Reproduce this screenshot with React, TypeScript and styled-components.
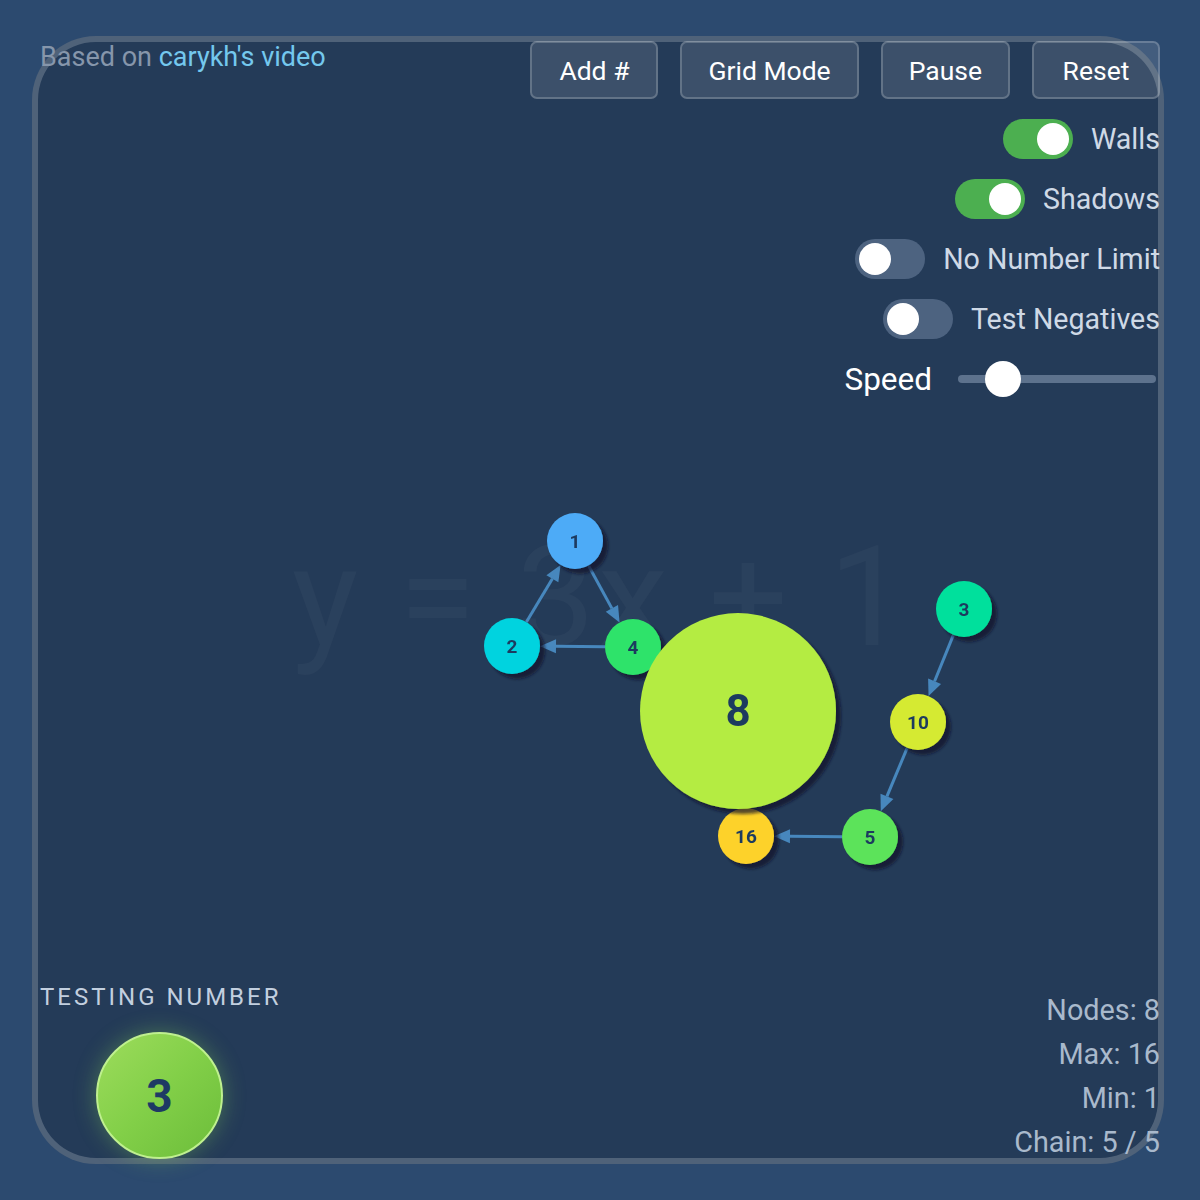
import React from "react";
import styled, { createGlobalStyle } from "styled-components";

const GlobalStyle = createGlobalStyle`
  html, body {
    margin: 0;
    padding: 0;
    background: #2c4a6f;
  }
  * {
    box-sizing: border-box;
  }
`;

type GraphNode = { id: number; x: number; y: number; r: number; color: string };

// drawing order matters: 8 sits on top of 16
const nodes: GraphNode[] = [
  { id: 1, x: 575, y: 541, r: 28, color: "#4dabf7" },
  { id: 2, x: 512, y: 646, r: 28, color: "#00d3df" },
  { id: 4, x: 633, y: 647, r: 28, color: "#2fe36b" },
  { id: 3, x: 964, y: 609, r: 28, color: "#00e09c" },
  { id: 10, x: 918, y: 722, r: 28, color: "#d5ea31" },
  { id: 5, x: 870, y: 837, r: 28, color: "#5be35a" },
  { id: 16, x: 746, y: 836, r: 28, color: "#fdd22a" },
  { id: 8, x: 738, y: 711, r: 98, color: "#b4ec43" },
];

const edges: [number, number][] = [
  [2, 1],
  [1, 4],
  [4, 2],
  [3, 10],
  [10, 5],
  [5, 16],
];

const buttons = ["Add #", "Grid Mode", "Pause", "Reset"];

const toggles = [
  { label: "Walls", on: true },
  { label: "Shadows", on: true },
  { label: "No Number Limit", on: false },
  { label: "Test Negatives", on: false },
];

const stats = ["Nodes: 8", "Max: 16", "Min: 1", "Chain: 5 / 5"];

const speed = 1 / 6;

const Page = styled.div`
  position: relative;
  width: 1200px;
  height: 1200px;
  padding: 36px 36px 36px 32px;
  font-family: Roboto, "Liberation Sans", sans-serif;
  overflow: hidden;
`;

const Panel = styled.div`
  width: 100%;
  height: 100%;
  background: #243b58;
  border: 6px solid rgba(255, 255, 255, 0.2);
  border-radius: 64px;
`;

const Graph = styled.svg`
  position: absolute;
  inset: 0;
  width: 1200px;
  height: 1200px;
`;

const Hud = styled.div`
  position: absolute;
  top: 40px;
  left: 40px;
  right: 40px;
  bottom: 36px;
  display: flex;
  flex-direction: column;
  justify-content: space-between;
`;

const TopRow = styled.div`
  display: flex;
  justify-content: space-between;
  align-items: flex-start;
`;

const BottomRow = styled.div`
  display: flex;
  justify-content: space-between;
  align-items: flex-end;
`;

const Credit = styled.div`
  font-size: 27px;
  line-height: 34px;
  color: #8696ab;
`;

const CreditLink = styled.a`
  color: #74c8ee;
  text-decoration: none;
`;

const Controls = styled.div`
  display: flex;
  flex-direction: column;
  align-items: flex-end;
  gap: 20px;
  padding-top: 1px;
`;

const ButtonRow = styled.div`
  display: flex;
  gap: 22px;
`;

const Button = styled.button`
  min-width: 128px;
  height: 58px;
  padding: 0 26px;
  font-family: inherit;
  font-size: 26.5px;
  color: #ffffff;
  background: rgba(255, 255, 255, 0.11);
  border: 2px solid rgba(255, 255, 255, 0.2);
  border-radius: 7px;
`;

const ToggleRow = styled.div`
  display: flex;
  align-items: center;
  gap: 18px;
  height: 40px;
`;

const Switch = styled.div<{ $on: boolean }>`
  position: relative;
  width: 70px;
  height: 40px;
  border-radius: 20px;
  background: ${(p) => (p.$on ? "#4caf50" : "#4d6380")};

  &::after {
    content: "";
    position: absolute;
    top: 4px;
    left: ${(p) => (p.$on ? "34px" : "4px")};
    width: 32px;
    height: 32px;
    border-radius: 50%;
    background: #ffffff;
  }
`;

const ToggleLabel = styled.span`
  font-size: 28.6px;
  color: #cfd9e6;
`;

const SpeedRow = styled.div`
  display: flex;
  align-items: center;
  gap: 26px;
  height: 40px;
  padding-right: 4px;
`;

const SpeedLabel = styled.span`
  font-size: 31.5px;
  color: #ffffff;
`;

const Track = styled.div`
  position: relative;
  width: 198px;
  height: 8px;
  border-radius: 4px;
  background: #5d728d;
`;

const Knob = styled.div`
  position: absolute;
  top: -14px;
  width: 36px;
  height: 36px;
  border-radius: 50%;
  background: #ffffff;
`;

const Testing = styled.div`
  display: flex;
  flex-direction: column;
  gap: 21px;
  padding-bottom: 5px;
`;

const TestingLabel = styled.div`
  font-size: 24px;
  line-height: 28px;
  letter-spacing: 3px;
  color: #c2cfdf;
`;

const Ball = styled.div`
  width: 127px;
  height: 127px;
  margin-left: 56px;
  border-radius: 50%;
  display: flex;
  align-items: center;
  justify-content: center;
  background: linear-gradient(135deg, #9ddc5c 0%, #82cf48 50%, #6cbd3a 100%);
  border: 2px solid #bff08f;
  box-shadow: 0 0 22px rgba(140, 220, 80, 0.35);
  font-size: 46px;
  font-weight: 700;
  color: #1e3a64;
`;

const Stats = styled.div`
  display: flex;
  flex-direction: column;
  align-items: flex-end;
`;

const StatLine = styled.div`
  font-size: 28.8px;
  line-height: 44px;
  color: #a9b9cc;
`;

function Edges() {
  const byId = new Map(nodes.map((n) => [n.id, n]));
  return (
    <g stroke="#4e95cf" strokeWidth={3} strokeOpacity={0.85}>
      {edges.map(([a, b]) => {
        const s = byId.get(a)!;
        const t = byId.get(b)!;
        const dx = t.x - s.x;
        const dy = t.y - s.y;
        const len = Math.hypot(dx, dy);
        const ux = dx / len;
        const uy = dy / len;
        const x1 = s.x + ux * s.r;
        const y1 = s.y + uy * s.r;
        const tipX = t.x - ux * t.r;
        const tipY = t.y - uy * t.r;
        const baseX = tipX - ux * 16;
        const baseY = tipY - uy * 16;
        const px = -uy * 7;
        const py = ux * 7;
        return (
          <g key={`${a}-${b}`}>
            <line x1={x1} y1={y1} x2={baseX} y2={baseY} />
            <polygon
              points={`${tipX},${tipY} ${baseX + px},${baseY + py} ${baseX - px},${baseY - py}`}
              fill="#4e95cf"
              fillOpacity={0.85}
              stroke="none"
            />
          </g>
        );
      })}
    </g>
  );
}

export default function App() {
  return (
    <>
      <GlobalStyle />
      <Page>
        <Panel />
        <Graph viewBox="0 0 1200 1200">
          <defs>
            <filter id="nodeShadow" x="-30%" y="-30%" width="160%" height="160%">
              <feDropShadow dx="5" dy="5" stdDeviation="1.5" floodColor="#0d1726" floodOpacity="0.7" />
            </filter>
          </defs>
          <text
            x={292}
            y={645}
            fontFamily="Roboto, sans-serif"
            fontSize={140}
            letterSpacing={3}
            fill="#ffffff"
            fillOpacity={0.03}
          >
            y = 3x + 1
          </text>
          <Edges />
          {nodes.map((n) => (
            <g key={n.id} filter="url(#nodeShadow)">
              <circle cx={n.x} cy={n.y} r={n.r} fill={n.color} />
              <text
                x={n.x}
                y={n.y}
                textAnchor="middle"
                dominantBaseline="central"
                fontFamily="Roboto, sans-serif"
                fontWeight={700}
                fontSize={n.r > 50 ? 44 : 19}
                fill="#1e3a5f"
              >
                {n.id}
              </text>
            </g>
          ))}
        </Graph>
        <Hud>
          <TopRow>
            <Credit>
              Based on <CreditLink href="#">carykh's video</CreditLink>
            </Credit>
            <Controls>
              <ButtonRow>
                {buttons.map((b) => (
                  <Button key={b}>{b}</Button>
                ))}
              </ButtonRow>
              {toggles.map((t) => (
                <ToggleRow key={t.label}>
                  <Switch $on={t.on} />
                  <ToggleLabel>{t.label}</ToggleLabel>
                </ToggleRow>
              ))}
              <SpeedRow>
                <SpeedLabel>Speed</SpeedLabel>
                <Track>
                  <Knob style={{ left: `${speed * 162}px` }} />
                </Track>
              </SpeedRow>
            </Controls>
          </TopRow>
          <BottomRow>
            <Testing>
              <TestingLabel>TESTING NUMBER</TestingLabel>
              <Ball>3</Ball>
            </Testing>
            <Stats>
              {stats.map((s) => (
                <StatLine key={s}>{s}</StatLine>
              ))}
            </Stats>
          </BottomRow>
        </Hud>
      </Page>
    </>
  );
}
